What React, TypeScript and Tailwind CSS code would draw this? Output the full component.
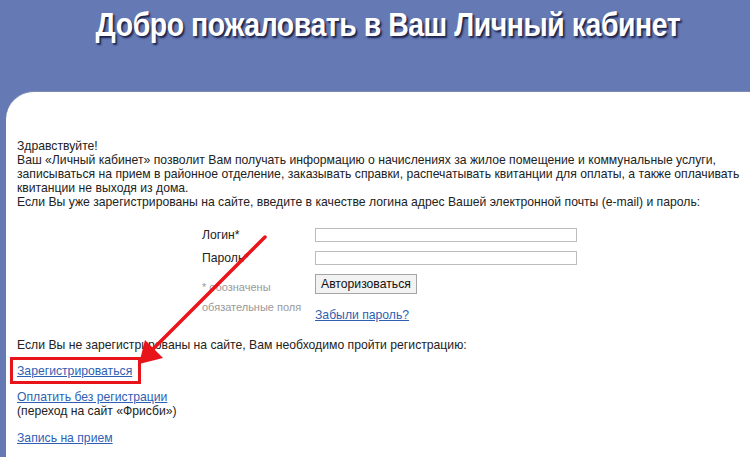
import React from "react";

export default function App() {
  return (
    <div className="relative w-[750px] h-[457px] overflow-hidden bg-[#6579b5] font-['Liberation_Sans',Arial,sans-serif]">
      <div className="h-[91px] flex justify-center pt-[1px] pl-[26px]">
        <h1 className="text-[33px] leading-[48px] font-bold text-white tracking-[-0.5px] scale-x-[0.86] whitespace-nowrap [text-shadow:2px_2px_2px_#1b2147]">
          Добро пожаловать в Ваш Личный кабинет
        </h1>
      </div>
      <div className="ml-[6px] h-[366px] bg-white rounded-tl-[28px] border-t border-[#7b8ab0] pl-[11px] pt-[47px] text-[12.2px] leading-[14px] text-[#222] whitespace-nowrap">
        <p>Здравствуйте!</p>
        <p>
          Ваш «Личный кабинет» позволит Вам получать информацию о начислениях за жилое помещение и коммунальные услуги,
          <br />
          записываться на прием в районное отделение, заказывать справки, распечатывать квитанции для оплаты, а также оплачивать
          <br />
          квитанции не выходя из дома.
        </p>
        <p>Если Вы уже зарегистрированы на сайте, введите в качестве логина адрес Вашей электронной почты (e-mail) и пароль:</p>

        <div className="mt-[19px] ml-[185px] grid grid-cols-[113px_262px] gap-y-[9px] items-center">
          <span>Логин*</span>
          <input className="h-[14px] border border-[#bdbdbd] bg-white" />
          <span>Пароль*</span>
          <input className="h-[14px] border border-[#bdbdbd] bg-white" />
          <div className="self-start pt-[3px] text-[11px] leading-[20px] text-[#999]">
            <div>* обозначены</div>
            <div>обязательные поля</div>
          </div>
          <div className="flex flex-col items-start gap-[14px]">
            <button className="h-[20px] px-[5px] border border-[#a5a5a5] bg-[#f2f2f2] text-[12.2px] text-[#111] leading-[18px]">
              Авторизоваться
            </button>
            <a className="text-[#2f5fb3] underline">Забыли пароль?</a>
          </div>
        </div>

        <p className="mt-[16px]">Если Вы не зарегистрированы на сайте, Вам необходимо пройти регистрацию:</p>
        <p className="mt-[12px]"><a className="text-[#2f5fb3] underline">Зарегистрироваться</a></p>
        <p className="mt-[12px]"><a className="text-[#2f5fb3] underline">Оплатить без регистрации</a></p>
        <p>(переход на сайт «Фрисби»)</p>
        <p className="mt-[13px]"><a className="text-[#2f5fb3] underline">Запись на прием</a></p>
      </div>

      <div className="absolute left-[10px] top-[357px] w-[131px] h-[27px] border-[3px] border-[#e8141a]" />
      <svg className="absolute left-0 top-0" width="750" height="457" viewBox="0 0 750 457">
        <line x1="265" y1="237" x2="152" y2="350" stroke="#e8141a" strokeWidth="3.5" strokeLinecap="round" />
        <polygon points="139,364 145,340 163,358" fill="#e8141a" />
      </svg>
    </div>
  );
}
